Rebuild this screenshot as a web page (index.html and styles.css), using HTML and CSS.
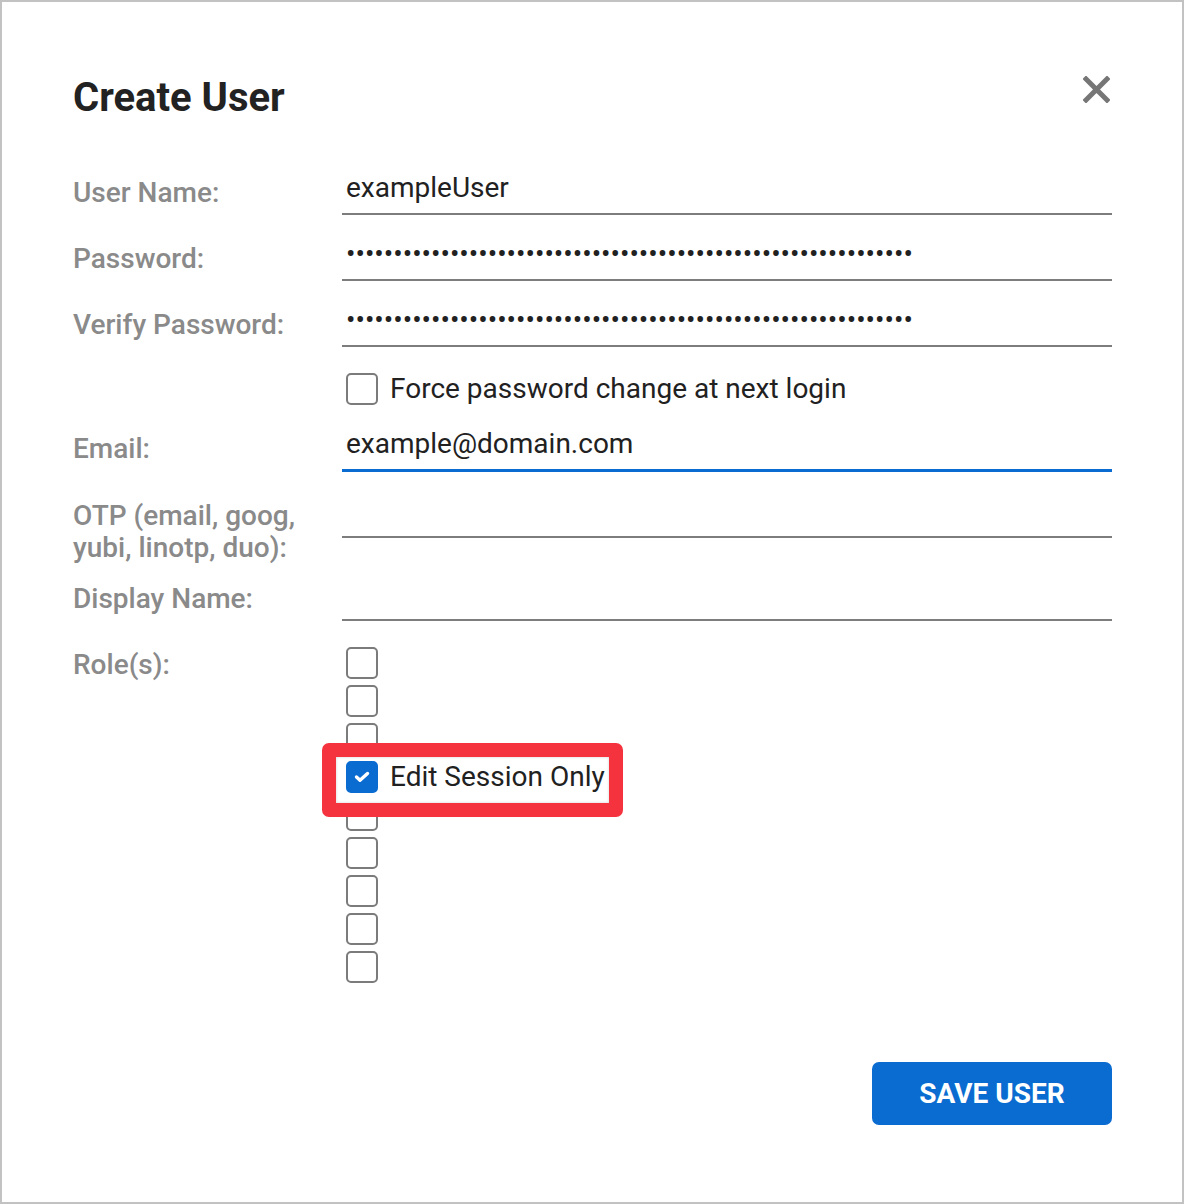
FILE: index.html
```html
<!DOCTYPE html>
<html lang="en">
<head>
<meta charset="utf-8">
<title>Create User</title>
<link rel="stylesheet" href="styles.css">
</head>
<body>
<div class="dialog">
  <div class="header">
    <h1 class="title">Create User</h1>
    <button class="close" aria-label="Close">
      <svg width="27" height="27" viewBox="0 0 27 27"><path d="M3 3 L24 24 M24 3 L3 24" stroke="#767676" stroke-width="5" stroke-linecap="square" fill="none"/></svg>
    </button>
  </div>
  <div class="form">
    <div class="row">
      <div class="label">User Name:</div>
      <div class="field">exampleUser</div>
    </div>
    <div class="row">
      <div class="label">Password:</div>
      <div class="field dots">••••••••••••••••••••••••••••••••••••••••••••••••••••••••••••</div>
    </div>
    <div class="row">
      <div class="label">Verify Password:</div>
      <div class="field dots">••••••••••••••••••••••••••••••••••••••••••••••••••••••••••••</div>
    </div>
    <div class="row check-row">
      <div></div>
      <div class="check"><span class="box"></span><span class="check-text">Force password change at next login</span></div>
    </div>
    <div class="row">
      <div class="label">Email:</div>
      <div class="field focused">example@domain.com</div>
    </div>
    <div class="row">
      <div class="label otp">OTP (email, goog,<br>yubi, linotp, duo):</div>
      <div class="field"></div>
    </div>
    <div class="row">
      <div class="label">Display Name:</div>
      <div class="field"></div>
    </div>
    <div class="row">
      <div class="label">Role(s):</div>
      <div class="roles">
        <div class="check"><span class="box"></span></div>
        <div class="check"><span class="box"></span></div>
        <div class="check"><span class="box"></span></div>
        <div class="check highlight"><span class="box checked"><svg width="16" height="12" viewBox="0 0 16 12"><path d="M2.5 6 L6 9.2 L13.5 2.5" stroke="#fff" stroke-width="3.4" fill="none" stroke-linecap="round" stroke-linejoin="round"/></svg></span><span class="check-text">Edit Session Only</span></div>
        <div class="check"><span class="box"></span></div>
        <div class="check"><span class="box"></span></div>
        <div class="check"><span class="box"></span></div>
        <div class="check"><span class="box"></span></div>
        <div class="check"><span class="box"></span></div>
      </div>
    </div>
  </div>
  <div class="footer">
    <button class="save">SAVE USER</button>
  </div>
</div>
</body>
</html>
```

FILE: styles.css
```css
*, *::before, *::after { box-sizing: border-box; }
html, body { margin: 0; padding: 0; background: #fff; }
body { font-family: Roboto, "Noto Sans", sans-serif; color: #212121; }

.dialog {
  width: 1184px;
  height: 1204px;
  border: 2px solid #c2c2c2;
  padding: 72px 70px 77px 71px;
  display: flex;
  flex-direction: column;
}

.header {
  display: flex;
  justify-content: space-between;
  align-items: flex-start;
  margin-bottom: 42px;
}
.title {
  margin: 0;
  font-size: 40px;
  line-height: 48px;
  font-weight: 700;
  color: #222;
}
.close {
  border: 0;
  background: none;
  padding: 0;
  margin: 2px 2px 0 0;
  width: 27px;
  height: 27px;
  display: block;
}
.close svg { display: block; }

.form {
  display: flex;
  flex-direction: column;
  gap: 15px;
}
.row {
  display: grid;
  grid-template-columns: 269px 1fr;
  align-items: start;
}
.label {
  padding-top: 13px;
  font-size: 28px;
  line-height: 32px;
  font-weight: 500;
  color: #8a8a8a;
}
.label.otp { margin-bottom: -9px; }

.field {
  height: 51px;
  border-bottom: 2px solid #7d7d7d;
  padding: 0 4px;
  font-size: 28px;
  line-height: 48px;
  color: #212121;
  white-space: nowrap;
  overflow: hidden;
}
.field.focused {
  height: 52px;
  border-bottom: 3px solid #0a6bd0;
}

.check-row { margin-top: 11px; }
.check {
  display: flex;
  align-items: center;
  padding-left: 4px;
  height: 32px;
}
.box {
  width: 32px;
  height: 32px;
  border: 2px solid #7b7b7b;
  border-radius: 5px;
  background: #fff;
  flex: none;
  display: flex;
  align-items: center;
  justify-content: center;
}
.box.checked {
  background: #0a6bd0;
  border-color: #0a6bd0;
}
.box svg { display: block; }
.check-text {
  margin-left: 12px;
  font-size: 28px;
  line-height: 32px;
  color: #212121;
}

.roles {
  padding-top: 11px;
  display: flex;
  flex-direction: column;
  gap: 6px;
}
.highlight {
  position: relative;
  z-index: 1;
}
.highlight::before {
  content: "";
  position: absolute;
  left: -20px;
  top: -18px;
  width: 301px;
  height: 74px;
  border: 14px solid #f5333f;
  border-radius: 7px;
  background: #fff;
  box-shadow: inset 0 0 3px rgba(0,0,0,0.18);
  z-index: -1;
}

.footer {
  margin-top: auto;
  display: flex;
  justify-content: flex-end;
}
.save {
  width: 240px;
  height: 63px;
  border: 0;
  border-radius: 7px;
  background: #0a6bd0;
  color: #fff;
  font-family: Roboto, "Noto Sans", sans-serif;
  font-size: 28px;
  font-weight: 700;
  padding: 0;
}
```
